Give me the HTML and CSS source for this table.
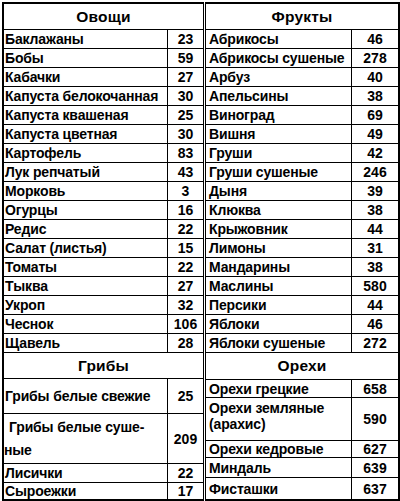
FILE: index.html
```html
<!DOCTYPE html>
<html lang="ru">
<head>
<meta charset="utf-8">
<link rel="stylesheet" href="styles.css">
</head>
<body>
<div class="sheet">
  <div class="col col-left">
    <div class="head">Овощи</div>
    <div class="row"><div class="name">Баклажаны</div><div class="num">23</div></div>
    <div class="row"><div class="name">Бобы</div><div class="num">59</div></div>
    <div class="row"><div class="name">Кабачки</div><div class="num">27</div></div>
    <div class="row"><div class="name">Капуста белокочанная</div><div class="num">30</div></div>
    <div class="row"><div class="name">Капуста квашеная</div><div class="num">25</div></div>
    <div class="row"><div class="name">Капуста цветная</div><div class="num">30</div></div>
    <div class="row"><div class="name">Картофель</div><div class="num">83</div></div>
    <div class="row"><div class="name">Лук репчатый</div><div class="num">43</div></div>
    <div class="row"><div class="name">Морковь</div><div class="num">3</div></div>
    <div class="row"><div class="name">Огурцы</div><div class="num">16</div></div>
    <div class="row"><div class="name">Редис</div><div class="num">22</div></div>
    <div class="row"><div class="name">Салат (листья)</div><div class="num">15</div></div>
    <div class="row"><div class="name">Томаты</div><div class="num">22</div></div>
    <div class="row"><div class="name">Тыква</div><div class="num">27</div></div>
    <div class="row"><div class="name">Укроп</div><div class="num">32</div></div>
    <div class="row"><div class="name">Чеснок</div><div class="num">106</div></div>
    <div class="row"><div class="name">Щавель</div><div class="num">28</div></div>
    <div class="head">Грибы</div>
    <div class="row row-34"><div class="name">Грибы белые свежие</div><div class="num">25</div></div>
    <div class="row row-50"><div class="name name-wrap">Грибы белые суше-<br>ные</div><div class="num">209</div></div>
    <div class="row"><div class="name">Лисички</div><div class="num">22</div></div>
    <div class="row row-last"><div class="name">Сыроежки</div><div class="num">17</div></div>
  </div>
  <div class="col col-right">
    <div class="head">Фрукты</div>
    <div class="row"><div class="name">Абрикосы</div><div class="num">46</div></div>
    <div class="row"><div class="name">Абрикосы сушеные</div><div class="num">278</div></div>
    <div class="row"><div class="name">Арбуз</div><div class="num">40</div></div>
    <div class="row"><div class="name">Апельсины</div><div class="num">38</div></div>
    <div class="row"><div class="name">Виноград</div><div class="num">69</div></div>
    <div class="row"><div class="name">Вишня</div><div class="num">49</div></div>
    <div class="row"><div class="name">Груши</div><div class="num">42</div></div>
    <div class="row"><div class="name">Груши сушеные</div><div class="num">246</div></div>
    <div class="row"><div class="name">Дыня</div><div class="num">39</div></div>
    <div class="row"><div class="name">Клюква</div><div class="num">38</div></div>
    <div class="row"><div class="name">Крыжовник</div><div class="num">44</div></div>
    <div class="row"><div class="name">Лимоны</div><div class="num">31</div></div>
    <div class="row"><div class="name">Мандарины</div><div class="num">38</div></div>
    <div class="row"><div class="name">Маслины</div><div class="num">580</div></div>
    <div class="row"><div class="name">Персики</div><div class="num">44</div></div>
    <div class="row"><div class="name">Яблоки</div><div class="num">46</div></div>
    <div class="row"><div class="name">Яблоки сушеные</div><div class="num">272</div></div>
    <div class="head head-27">Орехи</div>
    <div class="row row-18"><div class="name">Орехи грецкие</div><div class="num">658</div></div>
    <div class="row row-43"><div class="name name-two">Орехи земляные<br>(арахис)</div><div class="num">590</div></div>
    <div class="row row-17"><div class="name">Орехи кедровые</div><div class="num">627</div></div>
    <div class="row row-20"><div class="name">Миндаль</div><div class="num">639</div></div>
    <div class="row row-last"><div class="name">Фисташки</div><div class="num">637</div></div>
  </div>
</div>
</body>
</html>
```

FILE: styles.css
```css
* { box-sizing: border-box; }
html, body { margin: 0; padding: 0; background: #fff; }
body {
  font-family: "Liberation Sans", Arial, sans-serif;
  font-weight: bold;
  color: #000;
  font-size: 14px;
}
.sheet {
  display: flex;
  gap: 1px;
  padding: 2px 0 0 2px;
  width: 400px;
}
.col {
  display: flex;
  flex-direction: column;
  border-top: 2px solid #000;
  border-bottom: 2px solid #000;
  height: 499px;
}
.col-left {
  width: 202px;
  border-left: 2px solid #000;
  border-right: 1px solid #000;
}
.col-right {
  width: 195px;
  border-left: 1px solid #000;
  border-right: 2px solid #000;
}
.head {
  height: 26px;
  border-bottom: 1px solid #000;
  display: flex;
  align-items: center;
  justify-content: center;
  font-size: 15.5px;
  letter-spacing: 0.2px;
}
.head-27 { height: 27px; }
.row {
  height: 19px;
  display: flex;
  border-bottom: 1px solid #000;
  white-space: nowrap;
}
.row-34 { height: 35px; }
.row-50 { height: 50px; }
.row-18 { height: 18px; }
.row-43 { height: 43px; }
.row-17 { height: 17px; }
.row-20 { height: 20px; }
.row-last { flex: 1; border-bottom: none; }
.name {
  display: flex;
  align-items: center;
  border-right: 1px solid #000;
  padding-left: 1px;
  letter-spacing: -0.15px;
}
.col-left .name { flex: 0 0 164px; }
.col-right .name { flex: 0 0 146px; padding-left: 3px; }
.name-wrap {
  display: block;
  line-height: 23px;
  padding-top: 2px;
  padding-left: 0;
  text-indent: 5px;
}
.name-two {
  display: block;
  line-height: 16px;
  padding-top: 2px;
}
.num {
  flex: 1;
  display: flex;
  align-items: center;
  justify-content: center;
}
```
